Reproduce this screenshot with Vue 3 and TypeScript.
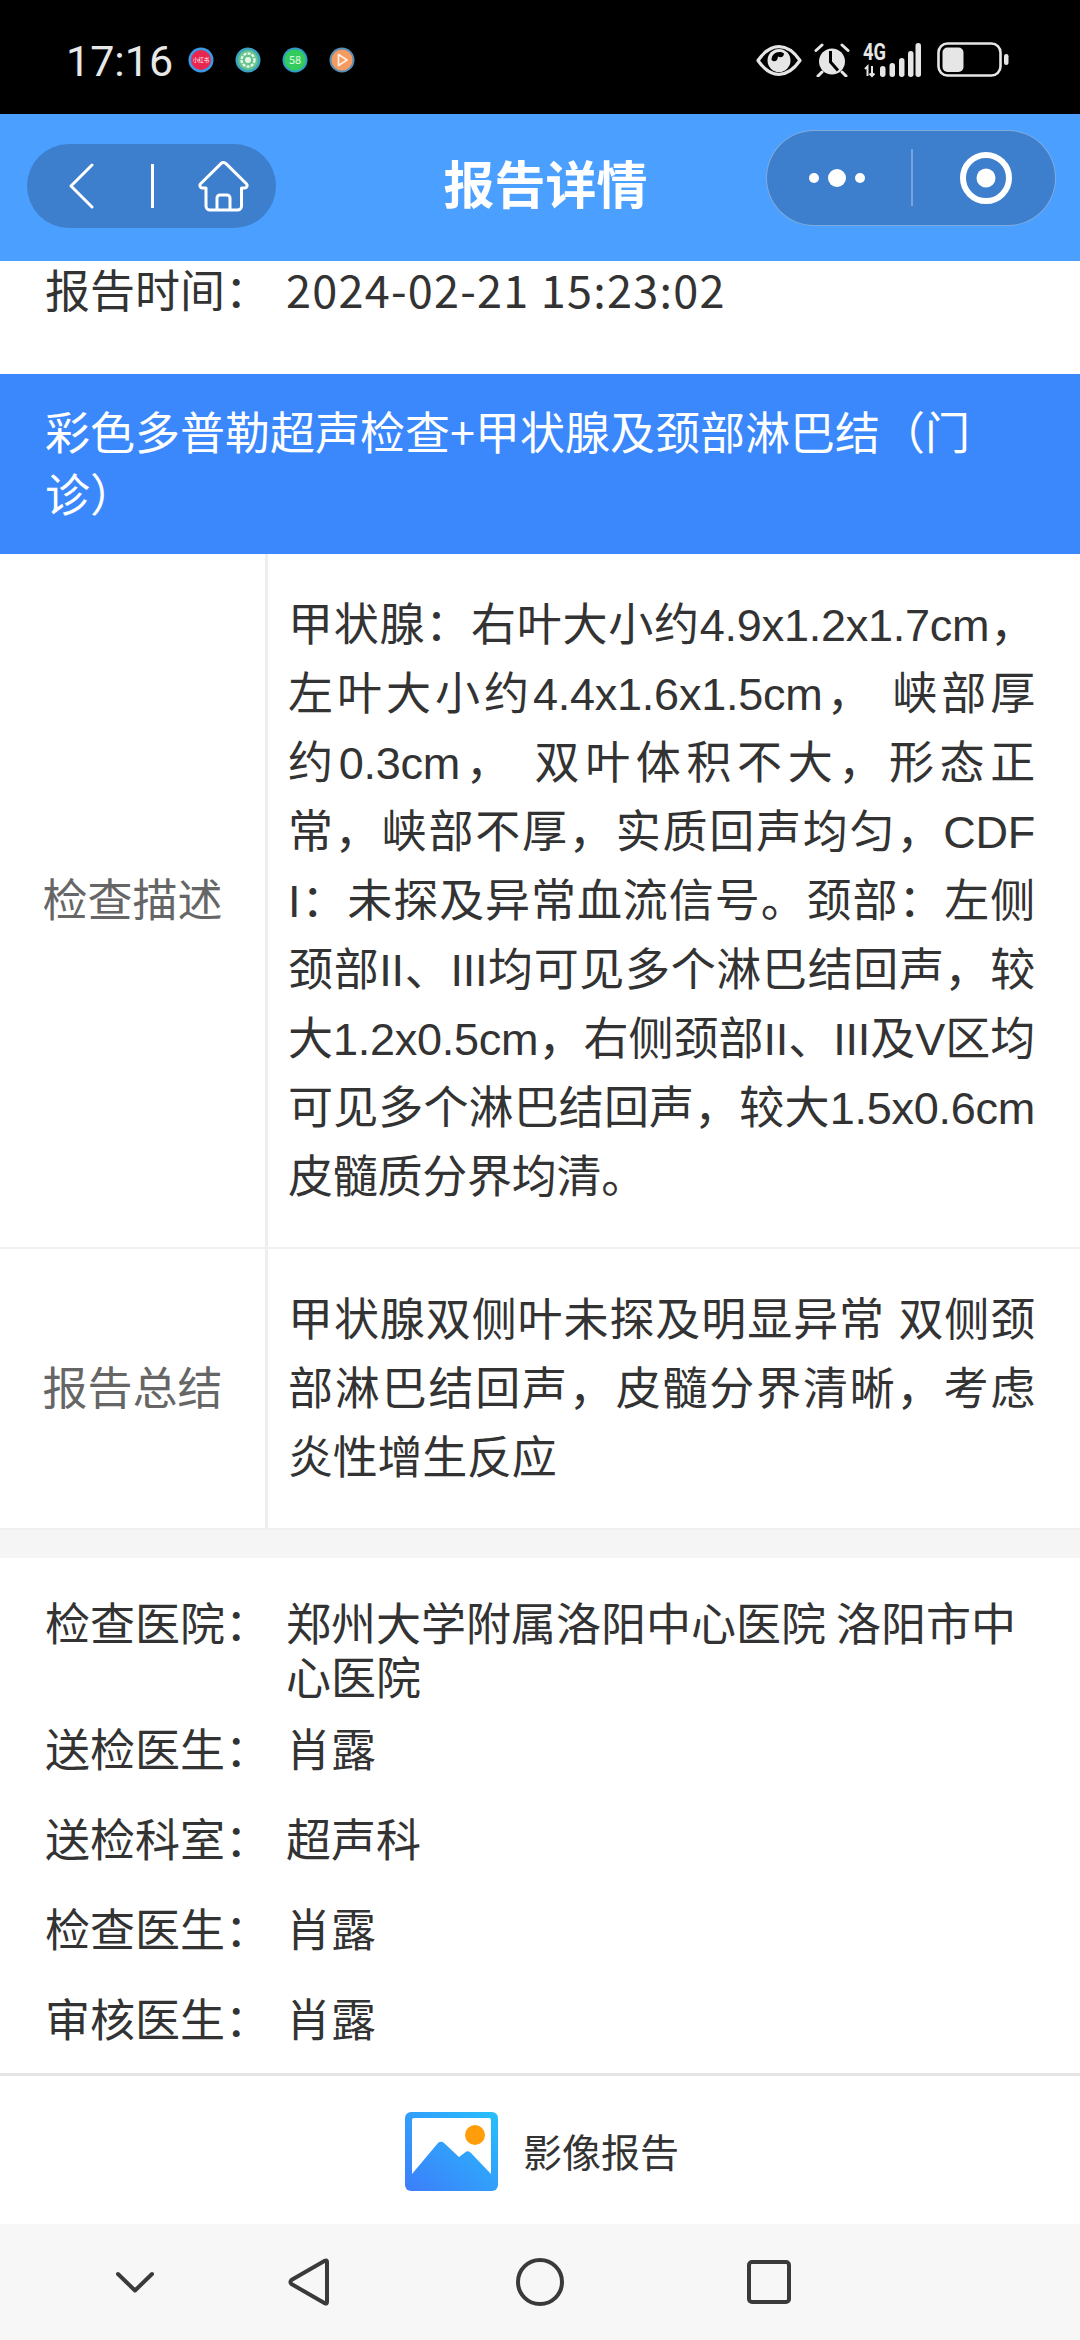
<script setup lang="ts">
interface InfoRow {
  label: string
  value: string
}

// Full-width CJK punctuation, written as escapes.
const colon = '\uFF1A'
const comma = '\uFF0C'
const open = '\uFF08'
const close = '\uFF09'

const timeLabel = `报告时间${colon}`
const bandTitle = `彩色多普勒超声检查+甲状腺及颈部淋巴结${open}门诊${close}`

const infoRows: InfoRow[] = [
  { label: `检查医院${colon}`, value: '郑州大学附属洛阳中心医院 洛阳市中心医院' },
  { label: `送检医生${colon}`, value: '肖露' },
  { label: `送检科室${colon}`, value: '超声科' },
  { label: `检查医生${colon}`, value: '肖露' },
  { label: `审核医生${colon}`, value: '肖露' },
]

const description = [
  `甲状腺${colon}右叶大小约4.9x1.2x1.7cm${comma}`,
  `左叶大小约4.4x1.6x1.5cm${comma} 峡部厚约0.3cm${comma} 双叶体积不大${comma}`,
  `形态正常${comma}峡部不厚${comma}实质回声均匀${comma}CDFI${colon}未探及异常血流信号。`,
  `颈部${colon}左侧颈部II、III均可见多个淋巴结回声${comma}较大1.2x0.5cm${comma}`,
  `右侧颈部II、III及V区均可见多个淋巴结回声${comma}较大1.5x0.6cm皮髓质分界均清。`,
].join('')
const summary = `甲状腺双侧叶未探及明显异常 双侧颈部淋巴结回声${comma}皮髓分界清晰${comma}考虑炎性增生反应`
</script>

<template>
  <div class="page">
    <header class="status">
      <span class="clock">17:16</span>
      <div class="notes">
        <svg class="note" viewBox="0 0 26 26">
          <circle cx="13" cy="13" r="12.5" fill="#3b9be6" />
          <circle cx="13" cy="13" r="10" fill="#e8264f" />
          <text x="13" y="15" text-anchor="middle" font-size="5.5" fill="#fff" class="notefont">小红书</text>
        </svg>
        <svg class="note" viewBox="0 0 26 26">
          <circle cx="13" cy="13" r="12.5" fill="#3aa5c0" />
          <circle cx="13" cy="13" r="10" fill="#66c48a" />
          <circle cx="13" cy="13" r="6.5" fill="none" stroke="#e8f6ec" stroke-width="2.4" stroke-dasharray="3 1.2" />
          <circle cx="13" cy="13" r="3" fill="#e8f6ec" />
        </svg>
        <svg class="note" viewBox="0 0 26 26">
          <circle cx="13" cy="13" r="12.5" fill="#2f9ec4" />
          <circle cx="13" cy="13" r="10.5" fill="#33cc5c" />
          <text x="13" y="17" text-anchor="middle" font-size="11" fill="#e4f8e8" class="notefont">58</text>
        </svg>
        <svg class="note" viewBox="0 0 26 26">
          <circle cx="13" cy="13" r="12.5" fill="#5a90b8" />
          <circle cx="13" cy="13" r="10.5" fill="#f59a60" />
          <path d="M9.5 7.5 L18 13 L9.5 18.5 Z" fill="none" stroke="#fdeee2" stroke-width="1.8" stroke-linejoin="round" />
        </svg>
      </div>
      <div class="sys">
        <svg class="eye" viewBox="0 0 46 31">
          <path d="M2 15.5 C10 4 17 1.7 23 1.7 C29 1.7 36 4 44 15.5 C36 27 29 29.3 23 29.3 C17 29.3 10 27 2 15.5 Z" fill="none" stroke="#e6e6e6" stroke-width="3.2" stroke-linejoin="round" />
          <circle cx="23" cy="15.5" r="11.5" fill="#e6e6e6" />
          <path d="M15.5 15 C18 17.5 21.5 16.5 22 11.5 C25 13.5 28 11.5 28 8.5 C23 5 15.5 8 15.5 15 Z" fill="#000" />
        </svg>
        <svg class="alarm" viewBox="0 0 36 34">
          <circle cx="18" cy="18.5" r="13" fill="#e6e6e6" />
          <path d="M16.5 8 V19 L24 27.5" fill="none" stroke="#000" stroke-width="3" />
          <path d="M2 7.5 L8 2 M34 7.5 L28 2 M8 29 L4 33 M28 29 L32 33" stroke="#e6e6e6" stroke-width="3" stroke-linecap="round" />
        </svg>
        <svg class="signal" viewBox="0 -8 58 43">
          <text x="0" y="17" font-size="24" font-weight="700" fill="#e6e6e6" textLength="23" lengthAdjust="spacingAndGlyphs" class="sigfont">4G</text>
          <path d="M2 26 L4.5 23.5 V33 M9 23 V33 M6.5 30.5 L9 33 L11.5 30.5" fill="none" stroke="#e6e6e6" stroke-width="2" />
          <rect x="17" y="23" width="5.5" height="11" rx="2.7" fill="#e6e6e6" />
          <rect x="26.5" y="20" width="5.5" height="14" rx="2.7" fill="#e6e6e6" />
          <rect x="36" y="15" width="5.5" height="19" rx="2.7" fill="#e6e6e6" />
          <rect x="45" y="8" width="5.5" height="26" rx="2.7" fill="#e6e6e6" />
          <rect x="52.5" y="0" width="5.5" height="34" rx="2.7" fill="#e6e6e6" />
        </svg>
        <svg class="battery" viewBox="0 0 72 35">
          <rect x="1.5" y="1.5" width="62" height="32" rx="9" fill="none" stroke="#e6e6e6" stroke-width="2.6" />
          <rect x="5.5" y="5.5" width="21" height="24.5" rx="5" fill="#e6e6e6" />
          <rect x="67" y="12" width="4.5" height="11" rx="2.2" fill="#e6e6e6" />
        </svg>
      </div>
    </header>

    <nav class="nav">
      <div class="capsule-left">
        <svg class="back" viewBox="0 0 25 46">
          <path d="M23 2 L2 23 L23 44" fill="none" stroke="#fff" stroke-width="3" stroke-linecap="round" stroke-linejoin="round" />
        </svg>
        <span class="bar-left"></span>
        <svg class="home" viewBox="0 0 51 51">
          <path d="M8 27 H4.5 A2.5 2.5 0 0 1 2.6 22.8 L23 2.6 A3.5 3.5 0 0 1 28 2.6 L48.4 22.8 A2.5 2.5 0 0 1 46.5 27 H43.5 V45 A4 4 0 0 1 39.5 49 H12 A4 4 0 0 1 8 45 Z" fill="none" stroke="#fff" stroke-width="3" stroke-linejoin="round" />
          <path d="M19 49 V37 A3 3 0 0 1 22 34 H29 A3 3 0 0 1 32 37 V49" fill="none" stroke="#fff" stroke-width="3" />
        </svg>
      </div>
      <h1 class="title">报告详情</h1>
      <div class="capsule-right">
        <svg class="dots" viewBox="0 0 56 18">
          <circle cx="5" cy="9" r="5" fill="#fff" />
          <circle cx="28" cy="9" r="9" fill="#fff" />
          <circle cx="51" cy="9" r="5" fill="#fff" />
        </svg>
        <span class="bar-right"></span>
        <svg class="ring" viewBox="0 0 52 52">
          <circle cx="26" cy="26" r="23" fill="none" stroke="#fff" stroke-width="6" />
          <circle cx="26" cy="26" r="9.5" fill="#fff" />
        </svg>
      </div>
    </nav>

    <section class="time-row">
      <span class="info-label">{{ timeLabel }}</span>
      <span class="time-value">2024-02-21 15:23:02</span>
    </section>

    <section class="band">{{ bandTitle }}</section>

    <section class="table">
      <div class="table-row">
        <div class="table-label">检查描述</div>
        <div class="table-text">{{ description }}</div>
      </div>
      <div class="table-row">
        <div class="table-label">报告总结</div>
        <div class="table-text">{{ summary }}</div>
      </div>
    </section>

    <section class="info">
      <div v-for="row in infoRows" :key="row.label" class="info-row">
        <div class="info-inner">
          <span class="info-label">{{ row.label }}</span>
          <span class="info-value">{{ row.value }}</span>
        </div>
      </div>
    </section>

    <footer class="footer">
      <svg class="picture" viewBox="0 0 93 79">
        <defs>
          <linearGradient id="pic" x1="0" y1="1" x2="1" y2="0">
            <stop offset="0" stop-color="#3d7dfb" />
            <stop offset="1" stop-color="#27c0fb" />
          </linearGradient>
        </defs>
        <rect width="93" height="79" rx="6" fill="url(#pic)" />
        <path d="M7 8 Q7 6 9 6 H84 Q86 6 86 8 V62 L66 41 Q63 38 60 40.5 L54 45 L39 31 Q36 28.5 33 31 L7 62 Z" fill="#fff" />
        <circle cx="70" cy="23" r="10" fill="#ff9d0a" />
      </svg>
      <span class="footer-text">影像报告</span>
    </footer>

    <div class="sysnav">
      <svg class="chev" viewBox="0 0 38 22">
        <path d="M2 3 L19 19.5 L36 3" fill="none" stroke="#3a3a3a" stroke-width="4" stroke-linecap="round" stroke-linejoin="round" />
      </svg>
      <svg class="tri" viewBox="0 0 42 48">
        <path d="M39 4 Q39 1.6 36.8 2.8 L3.4 22 Q1.6 24 3.4 26 L36.8 45.2 Q39 46.4 39 44 Z" fill="none" stroke="#3a3a3a" stroke-width="4" stroke-linejoin="round" />
      </svg>
      <svg class="circ" viewBox="0 0 48 48">
        <circle cx="24" cy="24" r="22" fill="none" stroke="#3a3a3a" stroke-width="4" />
      </svg>
      <svg class="sq" viewBox="0 0 44 44">
        <rect x="2" y="2" width="40" height="40" rx="3" fill="none" stroke="#3a3a3a" stroke-width="4" />
      </svg>
    </div>
  </div>
</template>

<style scoped>
.page {
  width: 1080px;
  height: 2340px;
  overflow: hidden;
  background: #fff;
  color: #333;
  font-family: "Noto Sans CJK SC", "Noto Sans", sans-serif;
  font-size: 45px;
  line-height: 54px;
}
.status {
  height: 114px;
  background: #000;
  display: flex;
  align-items: flex-start;
  padding-left: 66px;
  box-sizing: border-box;
}
.clock {
  font-family: Roboto, sans-serif;
  font-size: 43px;
  line-height: 50px;
  margin-top: 36px;
  color: #e8e8e8;
  width: 122px;
}
.notes {
  display: flex;
  gap: 21px;
  margin-top: 47px;
}
.note {
  width: 26px;
  height: 26px;
}
.notefont {
  font-family: "Noto Sans CJK SC", sans-serif;
}
.sigfont {
  font-family: Roboto, sans-serif;
}
.sys {
  display: flex;
  align-items: flex-start;
  margin-left: 401px;
}
.eye {
  width: 46px;
  height: 31px;
  margin-top: 45px;
}
.alarm {
  width: 36px;
  height: 34px;
  margin-top: 43px;
  margin-left: 12px;
}
.signal {
  width: 58px;
  height: 43px;
  margin-top: 35px;
  margin-left: 13px;
}
.battery {
  width: 72px;
  height: 35px;
  margin-top: 42px;
  margin-left: 16px;
}
.nav {
  height: 147px;
  background: #4a9fff;
  display: flex;
  align-items: flex-start;
  padding: 0 24px 0 27px;
  box-sizing: border-box;
}
.capsule-left {
  width: 249px;
  height: 84px;
  margin-top: 30px;
  border-radius: 42px;
  background: #3d7fcc;
  display: flex;
  align-items: center;
  flex-shrink: 0;
}
.back {
  width: 25px;
  height: 46px;
  margin-left: 42px;
}
.bar-left {
  width: 3px;
  height: 44px;
  background: #fff;
  margin-left: 57px;
}
.home {
  width: 51px;
  height: 51px;
  margin-left: 44px;
}
.title {
  flex: 1;
  margin: 0;
  padding-left: 49px;
  text-align: center;
  color: #fff;
  font-size: 51px;
  font-weight: 700;
  line-height: 136px;
}
.capsule-right {
  width: 290px;
  height: 96px;
  margin-top: 16px;
  border-radius: 48px;
  background: #3d7fcc;
  border: 1.5px solid rgba(255, 255, 255, 0.35);
  box-sizing: border-box;
  display: flex;
  align-items: center;
  flex-shrink: 0;
}
.dots {
  width: 56px;
  height: 18px;
  margin-left: 42px;
  margin-top: -1px;
}
.bar-right {
  width: 2px;
  height: 57px;
  background: rgba(255, 255, 255, 0.3);
  margin-left: 46px;
  margin-top: -1px;
}
.ring {
  width: 52px;
  height: 52px;
  margin-left: 47px;
  margin-top: -1px;
}
.time-row {
  height: 113px;
  box-sizing: border-box;
  padding: 1px 45px 0;
  display: flex;
}
.info-label {
  width: 241px;
  flex-shrink: 0;
}
.time-value {
  letter-spacing: 1.25px;
}
.band {
  background: #3a88fb;
  color: #fff;
  padding: 26px 45px 30px;
  line-height: 62px;
}
.table-row {
  display: flex;
  border-bottom: 2px solid #f0f0f0;
}
.table-label {
  width: 268px;
  box-sizing: border-box;
  flex-shrink: 0;
  border-right: 3px solid #eee;
  padding-bottom: 6px;
  display: flex;
  align-items: center;
  justify-content: center;
  color: #666;
}
.table-text {
  flex: 1;
  padding: 37px 45px 35px 20px;
  font-family: "Liberation Sans", "Noto Sans CJK SC", sans-serif;
  letter-spacing: -0.25px;
  line-height: 69px;
  text-align: justify;
  word-break: break-all;
}
.info {
  border-top: 28px solid #f5f5f5;
  padding: 37px 45px 10px;
}
.info-row {
  min-height: 90px;
  display: flex;
  flex-direction: column;
  justify-content: center;
}
.info-inner {
  display: flex;
}
.footer {
  height: 151px;
  box-sizing: border-box;
  border-top: 3px solid #e5e5e5;
  display: flex;
  align-items: center;
  padding-left: 405px;
}
.picture {
  width: 93px;
  height: 79px;
  margin-top: 3px;
}
.footer-text {
  font-size: 39px;
  margin-left: 25px;
}
.sysnav {
  height: 116px;
  background: #f7f7f7;
  display: flex;
  align-items: center;
}
.chev {
  width: 38px;
  height: 22px;
  margin-left: 116px;
}
.tri {
  width: 42px;
  height: 48px;
  margin-left: 134px;
}
.circ {
  width: 48px;
  height: 48px;
  margin-left: 186px;
}
.sq {
  width: 44px;
  height: 44px;
  margin-left: 183px;
}
</style>
